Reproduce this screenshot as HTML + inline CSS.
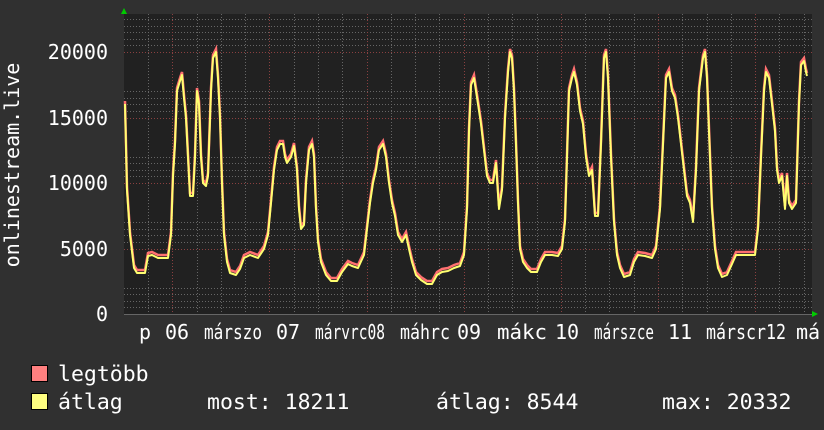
<!DOCTYPE html>
<html><head><meta charset="utf-8"><style>
html,body{margin:0;padding:0;background:#303030;}
svg{display:block}
text{font-family:"DejaVu Sans Mono","Liberation Mono",monospace;fill:#fff;font-size:20px}
.lg{font-size:21.5px}
</style></head><body>
<svg width="824" height="430" viewBox="0 0 824 430" xmlns="http://www.w3.org/2000/svg">
<rect width="824" height="430" fill="#303030"/>
<rect x="124" y="14" width="688" height="301" fill="#212121"/>
<g stroke="#666" stroke-width="1" stroke-dasharray="1,2">
<path d="M124 307.5H812M124 301.5H812M124 294.5H812M124 288.5H812M124 242.5H812M124 235.5H812M124 229.5H812M124 222.5H812M124 176.5H812M124 170.5H812M124 163.5H812M124 157.5H812M124 111.5H812M124 104.5H812M124 98.5H812M124 91.5H812M124 45.5H812M124 39.5H812M124 32.5H812M124 26.5H812M124 19.5H812"/>
<path d="M148.5 14V315M172.5 14V315M197.5 14V315M221.5 14V315M245.5 14V315M269.5 14V315M294.5 14V315M318.5 14V315M342.5 14V315M367.5 14V315M391.5 14V315M415.5 14V315M439.5 14V315M464.5 14V315M488.5 14V315M512.5 14V315M537.5 14V315M561.5 14V315M585.5 14V315M609.5 14V315M634.5 14V315M658.5 14V315M682.5 14V315M707.5 14V315M731.5 14V315M755.5 14V315M779.5 14V315M804.5 14V315"/>
</g>
<g stroke="#8a4040" stroke-width="1" stroke-dasharray="1,2">
<path d="M124 52.5H812M124 118.5H812M124 183.5H812M124 249.5H812"/>
<path d="M172.5 14V315M269.5 14V315M367.5 14V315M464.5 14V315M561.5 14V315M658.5 14V315M755.5 14V315"/>
</g>
<path d="M124 314.5H812" stroke="#666" stroke-width="1"/>
<polyline fill="none" stroke="#ff7070" stroke-width="2.5" transform="translate(0,-3)" points="125,104 127,190 130,235 134,268 137,273 145,273 148,256 152,255 158,258 168,258 171,235 173,176 175,144 177,91 180,81 182,75 184,98 186,118 188,157 190,196 193,196 195,157 197,91 199,104 201,157 203,183 206,186 208,176 211,91 213,58 216,52 218,78 220,118 222,183 224,235 227,262 230,273 236,275 240,269 244,258 250,255 258,258 264,249 268,235 271,203 274,170 277,150 280,144 283,144 285,157 287,163 291,157 294,146 297,170 299,209 301,229 304,225 306,183 309,150 312,144 314,157 316,209 318,242 321,262 326,275 331,281 337,281 342,272 348,264 352,266 358,268 364,255 367,229 370,203 373,183 376,170 379,150 383,144 386,157 389,183 392,203 395,216 398,235 402,242 406,235 409,249 412,262 416,275 421,280 427,284 432,284 437,275 442,272 448,271 454,268 460,266 464,255 467,209 469,131 471,85 474,78 476,91 478,104 481,124 484,150 487,176 490,183 493,183 496,163 499,209 502,190 505,118 508,72 510,52 512,58 514,91 516,144 518,203 520,249 523,262 527,268 531,272 537,272 541,262 545,255 552,255 558,256 562,249 565,222 567,157 569,91 572,78 574,72 577,85 580,111 583,124 586,157 589,176 592,170 595,216 598,216 601,144 604,58 606,52 608,78 611,157 614,222 617,255 620,268 624,277 630,275 634,262 638,255 645,256 652,258 656,249 660,209 663,144 666,78 669,72 672,91 675,98 678,118 681,144 684,170 687,196 690,203 693,222 696,170 699,91 703,58 705,52 707,78 709,131 712,209 715,249 718,268 722,277 727,275 732,264 736,255 742,255 750,255 755,255 758,229 761,157 764,91 766,72 769,78 772,104 775,131 777,170 779,183 782,176 785,209 787,176 789,203 792,209 796,203 799,104 801,65 804,61 806,72 807,76"/>
<polyline fill="none" stroke="#ffff70" stroke-width="2" stroke-linejoin="round" points="125,104 127,190 130,235 134,268 137,273 145,273 148,256 152,255 158,258 168,258 171,235 173,176 175,144 177,91 180,81 182,75 184,98 186,118 188,157 190,196 193,196 195,157 197,91 199,104 201,157 203,183 206,186 208,176 211,91 213,58 216,52 218,78 220,118 222,183 224,235 227,262 230,273 236,275 240,269 244,258 250,255 258,258 264,249 268,235 271,203 274,170 277,150 280,144 283,144 285,157 287,163 291,157 294,146 297,170 299,209 301,229 304,225 306,183 309,150 312,144 314,157 316,209 318,242 321,262 326,275 331,281 337,281 342,272 348,264 352,266 358,268 364,255 367,229 370,203 373,183 376,170 379,150 383,144 386,157 389,183 392,203 395,216 398,235 402,242 406,235 409,249 412,262 416,275 421,280 427,284 432,284 437,275 442,272 448,271 454,268 460,266 464,255 467,209 469,131 471,85 474,78 476,91 478,104 481,124 484,150 487,176 490,183 493,183 496,163 499,209 502,190 505,118 508,72 510,52 512,58 514,91 516,144 518,203 520,249 523,262 527,268 531,272 537,272 541,262 545,255 552,255 558,256 562,249 565,222 567,157 569,91 572,78 574,72 577,85 580,111 583,124 586,157 589,176 592,170 595,216 598,216 601,144 604,58 606,52 608,78 611,157 614,222 617,255 620,268 624,277 630,275 634,262 638,255 645,256 652,258 656,249 660,209 663,144 666,78 669,72 672,91 675,98 678,118 681,144 684,170 687,196 690,203 693,222 696,170 699,91 703,58 705,52 707,78 709,131 712,209 715,249 718,268 722,277 727,275 732,264 736,255 742,255 750,255 755,255 758,229 761,157 764,91 766,72 769,78 772,104 775,131 777,170 779,183 782,176 785,209 787,176 789,203 792,209 796,203 799,104 801,65 804,61 806,72 807,76"/>
<polygon points="121,14 127,14 124,8" fill="#00cc00"/>
<polygon points="812,311 812,317 818,314" fill="#00cc00"/>
<g text-anchor="end">
<text x="108" y="59">20000</text>
<text x="108" y="125">15000</text>
<text x="108" y="190">10000</text>
<text x="108" y="256">5000</text>
<text x="108" y="321">0</text>
</g>
<text transform="translate(19,165) rotate(-90)" text-anchor="middle">onlinestream.live</text>
<text x="139" y="339">p</text>
<text x="165" y="339">06</text>
<text x="204" y="339" textLength="58" lengthAdjust="spacingAndGlyphs">márszo</text>
<text x="276" y="339">07</text>
<text x="315" y="339" textLength="70" lengthAdjust="spacingAndGlyphs">márvrc08</text>
<text x="400" y="339" textLength="50" lengthAdjust="spacingAndGlyphs">máhrc</text>
<text x="457" y="339">09</text>
<text x="497" y="339" textLength="50" lengthAdjust="spacingAndGlyphs">mákc</text>
<text x="555" y="339">10</text>
<text x="594" y="339" textLength="60" lengthAdjust="spacingAndGlyphs">márszce</text>
<text x="668" y="339">11</text>
<text x="706" y="339" textLength="80" lengthAdjust="spacingAndGlyphs">márscr12</text>
<text x="796" y="339">má</text>
<rect x="31.5" y="365.5" width="16" height="16" fill="#ff8080" stroke="#000"/>
<rect x="31.5" y="393.5" width="16" height="16" fill="#ffff80" stroke="#000"/>
<text class="lg" x="58" y="381">legtöbb</text>
<text class="lg" x="58" y="409">átlag</text>
<text class="lg" x="207" y="409">most: 18211</text>
<text class="lg" x="436" y="409">átlag: 8544</text>
<text class="lg" x="662" y="409">max: 20332</text>
</svg>
</body></html>
